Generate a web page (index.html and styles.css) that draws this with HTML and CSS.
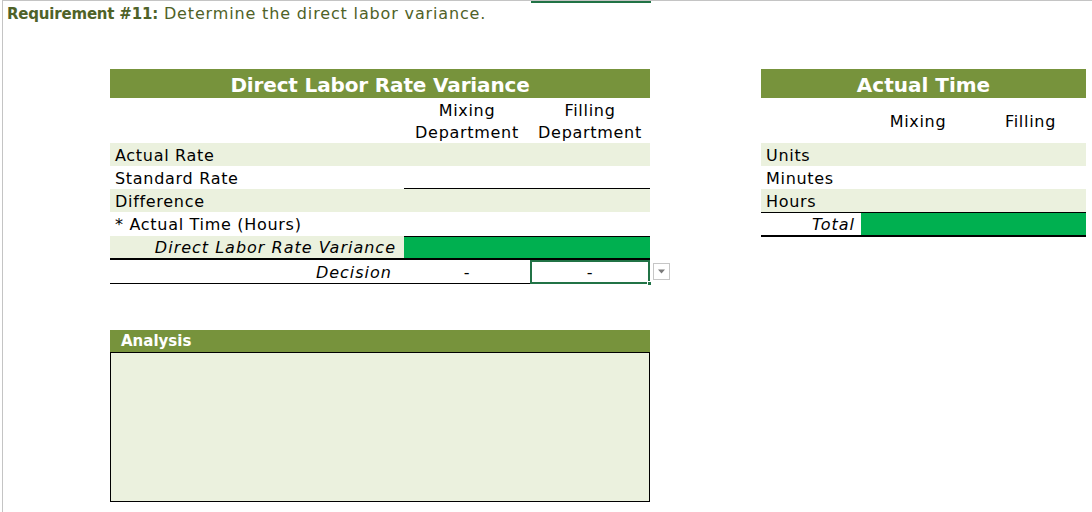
FILE: index.html
```html
<!DOCTYPE html>
<html>
<head>
<meta charset="utf-8">
<link rel="stylesheet" href="styles.css">
</head>
<body>
<div class="sheet">
  <div class="colsel"></div>
  <div class="rowsel"></div>
  <p class="req"><b>Requirement #11:</b> Determine the direct labor variance.</p>
  <div class="content">
    <div class="left">
      <div class="grid rate">
        <div class="hdr span3">Direct Labor Rate Variance</div>
        <div></div><div class="c">Mixing</div><div class="c">Filling</div>
        <div></div><div class="c">Department</div><div class="c">Department</div>
        <div class="lt lbl">Actual Rate</div><div class="lt"></div><div class="lt"></div>
        <div class="lbl">Standard Rate</div><div class="ul"></div><div class="ul"></div>
        <div class="lt lbl">Difference</div><div class="lt"></div><div class="lt"></div>
        <div class="lbl">* Actual Time (Hours)</div><div></div><div></div>
        <div class="lt lbl it r thick">Direct Labor Rate Variance</div><div class="gr thick"></div><div class="gr thick"></div>
        <div class="lbl it r dec ul">Decision</div><div class="c ul">-</div><div class="c ul sel">-<span class="handle"></span><span class="dd"><svg width="9" height="5" viewBox="0 0 9 5"><path d="M1 0.5 L8 0.5 L4.5 4.5 Z" fill="#7a7a7a"/></svg></span></div>
      </div>
      <div class="analysis">
        <div class="ahdr">Analysis</div>
        <div class="abox"></div>
      </div>
    </div>
    <div class="right">
      <div class="grid time">
        <div class="hdr span3 big">Actual Time</div>
        <div class="tall"></div><div class="c tall">Mixing</div><div class="c tall">Filling</div>
        <div class="lt lbl">Units</div><div class="lt"></div><div class="lt"></div>
        <div class="lbl">Minutes</div><div></div><div></div>
        <div class="lt lbl">Hours</div><div class="lt"></div><div class="lt"></div>
        <div class="lbl it r tot">Total</div><div class="gr tot"></div><div class="gr tot"></div>
      </div>
    </div>
  </div>
</div>
</body>
</html>
```
FILE: styles.css
```css
* { box-sizing: border-box; }
html, body { margin: 0; padding: 0; background: #fff; }
body { font-family: "DejaVu Sans", "Liberation Sans", sans-serif; color: #000; }

.sheet {
  position: relative;
  width: 1092px;
  height: 512px;
  margin-left: 2px;
  border-left: 1px solid #c4c4c4;
  border-top: 1px solid #c4c4c4;
  overflow: hidden;
}
.colsel {
  position: absolute;
  top: -1px;
  left: 528px;
  width: 120px;
  height: 3px;
  background: #217346;
}
.rowsel {
  position: absolute;
  left: -3px;
  top: 259px;
  width: 3px;
  height: 24px;
  background: #217346;
}

.req {
  margin: 0;
  padding: 3px 0 0 4px;
  height: 26px;
  font-size: 16px;
  letter-spacing: 0.85px;
  line-height: 20px;
  color: #4f6228;
}
.req b { color: #4f6228; font-size: 15px; letter-spacing: -0.2px; }

.content {
  display: flex;
  padding: 42px 0 0 107px;
}
.left { width: 540px; }
.right { width: 325px; margin-left: 111px; }

.grid { display: grid; font-size: 16px; letter-spacing: 0.7px; }
.rate { grid-template-columns: 294px 126px 120px; grid-template-rows: 29px 23px 22px 23px 23px 23px 24px 24px 24px; }
.time { grid-template-columns: 100px 114px 111px; grid-template-rows: 29px 45px 23px 23px 23px 25px; }

.grid > div { display: flex; align-items: center; white-space: nowrap; padding-top: 1px; }
.span3 { grid-column: 1 / 4; }
.hdr {
  background: #77933c;
  color: #fff;
  font-weight: bold;
  font-size: 20px;
  letter-spacing: -0.15px;
  justify-content: center;
}
.grid > .hdr { padding-top: 2px; }
.hdr.big { font-size: 20px; letter-spacing: 0; }
.c { justify-content: center; }
.lbl { padding-left: 5px; }
.r { justify-content: flex-end; padding-right: 8px; }
.it { font-style: italic; letter-spacing: 1px; }
.lt { background: #ebf1de; }
.gr { background: #00b050; }
.ul { border-bottom: 1px solid #000; }
.thick { border-bottom: 2px solid #000; }
.gr.thick { border-top: 1px solid #000; }
.dec.r { padding-right: 12px; }
.tot { border-top: 1px solid #000; border-bottom: 2px solid #000; }
.tot.r { padding-right: 6px; }

.sel {
  position: relative;
  border: 2px solid #217346;
}
.sel.ul { border-bottom: 2px solid #217346; }
.handle {
  position: absolute;
  right: -4px;
  bottom: -4px;
  width: 5px;
  height: 5px;
  background: #217346;
  border: 1px solid #fff;
}
.dd {
  position: absolute;
  left: 121px;
  top: 1px;
  width: 17px;
  height: 17px;
  border: 1px solid #c6c6c6;
  background: #fff;
  display: flex;
  align-items: center;
  justify-content: center;
}

.analysis { margin-top: 46px; }
.ahdr {
  height: 22px;
  background: #77933c;
  color: #fff;
  font-weight: bold;
  font-size: 15px;
  line-height: 22px;
  padding-left: 11px;
}
.abox {
  height: 150px;
  background: #ebf1de;
  border: 1px solid #000;
}
```
